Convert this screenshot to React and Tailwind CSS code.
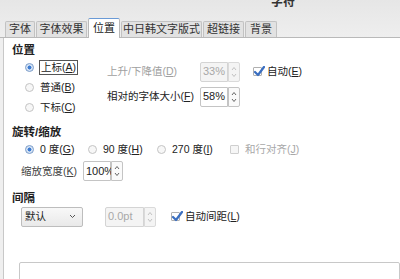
const font = {
  fontFamily: '"Liberation Sans", "Noto Sans CJK SC", sans-serif',
};

function Radio({ checked }) {
  return (
    <span
      className={
        "inline-block w-[9px] h-[9px] rounded-full border shrink-0 " +
        (checked
          ? "border-[#7a9cc8] bg-[radial-gradient(circle,#3d7bd1_0,#3d7bd1_35%,#cfe0f5_45%,#e6eef8_100%)]"
          : "border-[#c4c4c4] bg-[#f7f7f7]")
      }
    />
  );
}

function Check({ checked, disabled }) {
  return (
    <span
      className={
        "relative inline-block w-[9px] h-[9px] border shrink-0 rounded-[1px] " +
        (disabled ? "border-[#cfcfcf] bg-[#f6f6f6]" : "border-[#b0b0b0] bg-white")
      }
    >
      {checked && (
        <svg
          className="absolute -left-[1px] -top-[2px]"
          width="12"
          height="11"
          viewBox="0 0 12 11"
        >
          <path
            d="M2 6 L5 9 L11 1"
            fill="none"
            stroke="#3b6fc1"
            strokeWidth="2.2"
            strokeLinecap="round"
            strokeLinejoin="round"
          />
        </svg>
      )}
    </span>
  );
}

function U({ children }) {
  return <span className="underline underline-offset-1">{children}</span>;
}

function Spin({ value, disabled, w = "w-[28px]" }) {
  return (
    <div className="flex h-[20px]">
      <div
        className={
          w +
          " h-full border rounded-l-[2px] flex items-center pl-[2px] text-[11px] " +
          (disabled
            ? "border-[#d4d4d4] bg-[#f4f4f4] text-[#a8a8a8]"
            : "border-[#c4c4c4] bg-white text-[#222]")
        }
      >
        {value}
      </div>
      <div
        className={
          "w-[12px] h-full border rounded-r-[2px] flex flex-col items-center justify-center " +
          (disabled
            ? "border-[#dadada] bg-[#f4f4f4] text-[#bbb]"
            : "border-[#c4c4c4] bg-[#fafafa] text-[#555]")
        }
      >
        <svg width="6" height="5" viewBox="0 0 6 5">
          <path d="M1 4 L3 1.5 L5 4" fill="none" stroke="currentColor" strokeWidth="0.9" />
        </svg>
        <svg width="6" height="5" className="mt-[2px]" viewBox="0 0 6 5">
          <path d="M1 1 L3 3.5 L5 1" fill="none" stroke="currentColor" strokeWidth="0.9" />
        </svg>
      </div>
    </div>
  );
}

function Tab({ label, active, w }) {
  return (
    <div
      className={
        w +
        " flex items-center justify-center text-[11px] border border-b-0 rounded-t-[2px] " +
        (active
          ? "h-[20px] bg-white border-[#b9b9b9] border-t-[#6a9ad6] text-[#222] -mb-px relative z-10"
          : "h-[16px] bg-[#e2e2e2] border-[#c2c2c2] text-[#333]")
      }
    >
      {label}
    </div>
  );
}

export default function App() {
  return (
    <div
      className="w-[400px] h-[279px] overflow-hidden bg-[linear-gradient(#e6e6e6,#efefef_40px)] text-[#222]"
      style={font}
    >
      {/* title bar */}
      <div className="h-[19px] pl-[271px] overflow-hidden">
        <div className="-mt-[7px] text-[12px] font-bold text-[#333]">字符</div>
      </div>

      {/* tabs */}
      <div className="h-[19px] pl-[5px] flex items-end gap-px border-b border-[#b9b9b9]">
        <Tab label="字体" w="w-[30px]" />
        <Tab label="字体效果" w="w-[51px]" />
        <Tab label="位置" w="w-[32px]" active />
        <Tab label="中日韩文字版式" w="w-[81px]" />
        <Tab label="超链接" w="w-[41px]" />
        <Tab label="背景" w="w-[32px]" />
      </div>

      {/* page */}
      <div className="ml-[3px] h-[241px] bg-white border-l border-[#c8c8c8] text-[10.5px] leading-none">
        {/* 位置 */}
        <div className="pt-[7px] pl-[8px] font-bold text-[11.5px]">位置</div>
        <div className="flex pl-[21px] mt-[4px]">
          <div className="w-[82px] flex flex-col gap-[6px]">
            <div className="h-[14px] flex items-center gap-[5px]">
              <Radio checked />
              <span className="border border-[#555] px-[1px] py-[1px]">
                上标(<U>A</U>)
              </span>
            </div>
            <div className="h-[14px] flex items-center gap-[6px]">
              <Radio />
              <span>
                普通(<U>B</U>)
              </span>
            </div>
            <div className="h-[14px] flex items-center gap-[6px]">
              <Radio />
              <span>
                下标(<U>C</U>)
              </span>
            </div>
          </div>
          <div className="flex flex-col gap-[5px] pt-[1px]">
            <div className="flex items-center">
              <span className="w-[93px] text-[#a0a0a0]">
                上升/下降值(<U>D</U>)
              </span>
              <Spin value="33%" disabled />
              <span className="ml-[13px] flex items-center gap-[5px]">
                <Check checked />
                <span>
                  自动(<U>E</U>)
                </span>
              </span>
            </div>
            <div className="flex items-center">
              <span className="w-[93px]">
                相对的字体大小(<U>F</U>)
              </span>
              <Spin value="58%" />
            </div>
          </div>
        </div>

        {/* 旋转/缩放 */}
        <div className="mt-[12px] pl-[8px] font-bold text-[11.5px]">旋转/缩放</div>
        <div className="flex items-center pl-[21px] mt-[4px] h-[14px]">
          <Radio checked />
          <span className="ml-[6px] w-[48px]">
            0 度(<U>G</U>)
          </span>
          <Radio />
          <span className="ml-[6px] w-[54px]">
            90 度(<U>H</U>)
          </span>
          <Radio />
          <span className="ml-[6px] w-[58px]">
            270 度(<U>I</U>)
          </span>
          <Check disabled />
          <span className="ml-[6px] text-[#a8a8a8]">
            和行对齐(<U>J</U>)
          </span>
        </div>
        <div className="flex items-center pl-[17px] mt-[5px]">
          <span className="w-[62px] text-[#444]">
            缩放宽度(<U>K</U>)
          </span>
          <Spin value="100%" />
        </div>

        {/* 间隔 */}
        <div className="mt-[12px] pl-[8px] font-bold text-[11.5px]">间隔</div>
        <div className="flex items-center pl-[17px] mt-[2px]">
          <div className="w-[62px] h-[20px] border border-[#bdbdbd] rounded-[2px] bg-[linear-gradient(#f8f8f8,#e9e9e9)] flex items-center justify-between pl-[3px] pr-[6px]">
            <span>默认</span>
            <svg width="7" height="5" viewBox="0 0 7 5">
              <path d="M1 1 L3.5 3.5 L6 1" fill="none" stroke="#555" strokeWidth="1" />
            </svg>
          </div>
          <div className="ml-[22px]">
            <Spin value="0.0pt" disabled w="w-[39px]" />
          </div>
          <span className="ml-[15px] flex items-center gap-[5px]">
            <Check checked />
            <span>
              自动间距(<U>L</U>)
            </span>
          </span>
        </div>

        {/* preview */}
        <div className="ml-[15px] mt-[35px] h-[40px] border border-[#c8c8c8] rounded-[2px] bg-white" />
      </div>
    </div>
  );
}
